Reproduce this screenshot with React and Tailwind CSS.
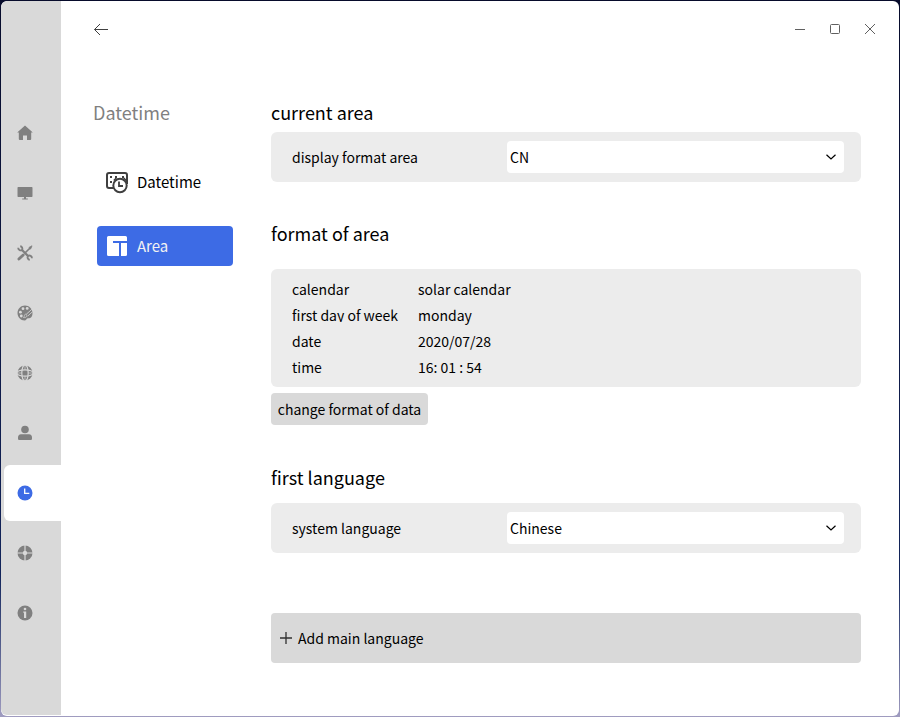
const gray = "#808080";

function HomeIcon() {
  return (
    <svg width="16" height="16" viewBox="0 0 16 16" fill={gray}>
      <path d="M8 .4 15.8 7.600H14.200V14a1 1 0 0 1-1 1H10V10.600H6V15H2.800a1 1 0 0 1-1-1V7.600H.2Z" />
    </svg>
  );
}

function DisplayIcon() {
  return (
    <svg width="16" height="16" viewBox="0 0 16 16" fill={gray}>
      <path d="M1.2 2H14.8a.7.7 0 0 1 .7.7V11.3a.7.7 0 0 1-.7.7H9v1.6h1.8V14.6H5.2V13.6H7V12H1.2a.7.7 0 0 1-.7-.7V2.7a.7.7 0 0 1 .7-.7Z" />
    </svg>
  );
}

function ToolsIcon() {
  return (
    <svg width="16" height="16" viewBox="0 0 16 16" fill="none" stroke={gray}>
      <path d="M1.9 14.1 6.2 9.9" strokeWidth="2.8" strokeLinecap="round" />
      <path d="M7.6 8.4 12.8 3.2" strokeWidth="1.5" />
      <path d="M12 2.400 15 .8 13.800 3.800 12.600 4.200Z" fill={gray} strokeWidth=".8" />
      <path d="M5 5 11.3 11.3" strokeWidth="2.3" />
      <path d="M1.2 2.8A2.500 2.500 0 0 0 5 5 2.500 2.500 0 0 0 3.200 1.200" strokeWidth="1.9" />
      <path d="M14.900 13.200A2.500 2.500 0 0 0 11 11 2.500 2.500 0 0 0 12.800 14.900" strokeWidth="1.9" />
    </svg>
  );
}

function PaletteIcon() {
  return (
    <svg width="16" height="16" viewBox="0 0 16 16">
      <path d="M8 .5C3.8.5.5 3.8.5 8s3.3 7.5 7 7.5c2 0 1.5-1.7 2.8-2.1 1.5-.4 2.2.5 3.7-.8.9-.8 1.5-2.6 1.5-4.6C15.5 3.8 12.2.5 8 .5Z" fill={gray} />
      <g fill="#d9d9d9">
        <circle cx="6" cy="3.7" r="1.4" />
        <circle cx="10.2" cy="3.4" r="1.4" />
        <circle cx="3.4" cy="7.2" r="1.4" />
        <circle cx="4.3" cy="11" r="1.4" />
      </g>
      <path d="M15 4.200 9.200 9.300M15.400 6.800 10.800 11" stroke="#d9d9d9" strokeWidth=".8" />
      <path d="M6.500 12.500c1.600.3 3.300-.3 3.600-2L8.700 9.200C7 9.300 7.700 11.600 6.500 12.500Z" fill={gray} stroke="#d9d9d9" strokeWidth=".7" />
    </svg>
  );
}

function GlobeIcon() {
  return (
    <svg width="16" height="16" viewBox="0 0 16 16">
      <circle cx="8" cy="8" r="7.6" fill={gray} />
      <g fill="none" stroke="#d9d9d9" strokeWidth="1.2">
        <ellipse cx="8" cy="8" rx="3.200" ry="8.200" />
        <ellipse cx="8" cy="8" rx="8.200" ry="3.200" />
        <path d="M8 0V4.500M8 11.500V16M0 8H4.500M11.500 8H16" strokeWidth=".7" />
      </g>
    </svg>
  );
}

function UserIcon() {
  return (
    <svg width="16" height="16" viewBox="0 0 16 16" fill={gray}>
      <circle cx="8" cy="4.500" r="3.800" />
      <path d="M4 9.200H12c2 0 3 1.400 3 3.400V13.400c0 .9-.6 1.600-1.500 1.600H2.500C1.600 15 1 14.300 1 13.400V12.600C1 10.600 2 9.200 4 9.200Z" />
    </svg>
  );
}

function ClockIcon() {
  return (
    <svg width="16" height="16" viewBox="0 0 16 16">
      <circle cx="8" cy="8" r="7.500" fill="#3d6be5" />
      <path d="M7.700 3.400V8.400H12.300" fill="none" stroke="#fff" strokeWidth="1.300" />
    </svg>
  );
}

function QuartersIcon() {
  return (
    <svg width="16" height="16" viewBox="0 0 16 16">
      <circle cx="8" cy="8" r="7.500" fill={gray} />
      <circle cx="8" cy="8" r="2.200" fill="#d9d9d9" />
      <path d="M8 0V16M0 8H16" stroke="#d9d9d9" strokeWidth="1.200" />
    </svg>
  );
}

function InfoIcon() {
  return (
    <svg width="16" height="16" viewBox="0 0 16 16">
      <circle cx="8" cy="8" r="7.500" fill={gray} />
      <circle cx="8" cy="4" r="1.300" fill="#d9d9d9" />
      <path d="M6.300 6.500H9.200V13H7V7.800H6.300Z" fill="#d9d9d9" />
    </svg>
  );
}

const navItems = [
  HomeIcon,
  DisplayIcon,
  ToolsIcon,
  PaletteIcon,
  GlobeIcon,
  UserIcon,
  ClockIcon,
  QuartersIcon,
  InfoIcon,
];

function Sidebar() {
  return (
    <nav className="flex h-[714px] w-[60px] shrink-0 flex-col gap-1 rounded-l-md bg-[#d9d9d9] pt-[104px] pl-[3px]">
      {navItems.map((Icon, i) => (
        <button
          key={i}
          className={
            i === 6
              ? "flex h-14 w-[57px] items-center rounded-l-md bg-white pl-[13px]"
              : "flex h-14 w-[57px] items-center rounded-l-md pl-[13px]"
          }
        >
          <Icon />
        </button>
      ))}
    </nav>
  );
}

function TitleBar() {
  return (
    <header className="flex h-14 items-center justify-between pr-[21px] pl-8">
      <svg width="16" height="16" viewBox="0 0 16 16" fill="none" stroke="#404040">
        <path d="M1.500 8.500H15M7 3 1.500 8.500 7 14" />
      </svg>
      <div className="flex gap-[19px]">
        <svg width="16" height="16" viewBox="0 0 16 16" fill="none" stroke="#606060">
          <path d="M3 8.500H13" />
        </svg>
        <svg width="16" height="16" viewBox="0 0 16 16" fill="none" stroke="#606060">
          <rect x="3.500" y="3.500" width="9" height="9" rx="1" />
        </svg>
        <svg width="16" height="16" viewBox="0 0 16 16" fill="none" stroke="#606060">
          <path d="M3 3 13 13M13 3 3 13" />
        </svg>
      </div>
    </header>
  );
}

function DatetimeIcon() {
  return (
    <svg width="24" height="24" viewBox="0 0 24 24" fill="none" stroke="#404040" strokeWidth="2">
      <path d="M9 18H4a2 2 0 0 1-2-2V5a2 2 0 0 1 2-2H20a2 2 0 0 1 2 2V14" />
      <path d="M5 7H7M5 12H7M10 7H12M17 7H19" />
      <circle cx="15" cy="15.500" r="6.700" fill="#fff" />
      <path d="M14 11.500V16H18" strokeWidth="1.800" />
      <path d="M8.800 10.500 11.300 8M18.700 8 21.200 10.500" strokeWidth="1.600" />
    </svg>
  );
}

function AreaIcon() {
  return (
    <svg width="20" height="20" viewBox="0 0 20 20" fill="#fff">
      <path d="M1.500 0H18.500A1.500 1.500 0 0 1 20 1.500V5H6V7H12V20H1.500A1.500 1.500 0 0 1 0 18.500V1.500A1.500 1.500 0 0 1 1.500 0Z" />
      <path d="M14 7H20V18.500A1.500 1.500 0 0 1 18.500 20H14Z" />
    </svg>
  );
}

function SubNav() {
  return (
    <aside className="flex w-[210px] shrink-0 flex-col pt-[41px] pl-8">
      <h1 className="h-7 text-[18px] leading-7 text-[#808080]">Datetime</h1>
      <div className="mt-9 ml-1 flex w-[136px] flex-col gap-6 text-[15px]">
        <button className="flex h-10 items-center gap-2 rounded pl-2 text-black">
          <DatetimeIcon />
          <span>Datetime</span>
        </button>
        <button className="flex h-10 items-center gap-[10px] rounded bg-[#3d6be5] pl-[10px] text-[#f2f2f2]">
          <AreaIcon />
          <span>Area</span>
        </button>
      </div>
    </aside>
  );
}

function SelectRow({ label, value }) {
  return (
    <div className="flex h-[50px] items-center rounded-md bg-[#ececec] pr-[17px] pl-[21px]">
      <span className="w-[215px]">{label}</span>
      <button className="flex h-8 flex-1 items-center justify-between rounded bg-white pr-[7px] pl-[3px]">
        <span>{value}</span>
        <svg width="12" height="12" viewBox="0 0 12 12" fill="none" stroke="#000" strokeWidth="1.200">
          <path d="M1.500 3.700 6 8 10.500 3.700" />
        </svg>
      </button>
    </div>
  );
}

function Content() {
  return (
    <main className="flex w-[590px] shrink-0 flex-col pt-[41px]">
      <h2 className="h-7 text-[18px] leading-7">current area</h2>
      <div className="mt-1.5">
        <SelectRow label="display format area" value="CN" />
      </div>

      <h2 className="mt-[37px] h-7 text-[18px] leading-7">format of area</h2>
      <div className="mt-[22px] grid h-[118px] auto-rows-[26px] grid-cols-[126px_1fr] rounded-md bg-[#ececec] pt-[7px] pl-[21px] leading-[26px]">
        <span>calendar</span>
        <span>solar calendar</span>
        <span className="h-5 overflow-hidden">first day of week</span>
        <span>monday</span>
        <span>date</span>
        <span>2020/07/28</span>
        <span>time</span>
        <span>16: 01 : 54</span>
      </div>
      <button className="mt-1.5 h-8 w-[157px] rounded bg-[#d9d9d9]">change format of data</button>

      <h2 className="mt-[38px] h-7 text-[18px] leading-7">first language</h2>
      <div className="mt-3">
        <SelectRow label="system language" value="Chinese" />
      </div>

      <button className="mt-[60px] flex h-[50px] items-center gap-1.5 rounded bg-[#d9d9d9] pl-[9px]">
        <svg width="12" height="12" viewBox="0 0 12 12" stroke="#303030" strokeWidth="1.300">
          <path d="M0 6H12M6 0V12" />
        </svg>
        <span>Add main language</span>
      </button>
    </main>
  );
}

export default function App() {
  return (
    <div className="h-[717px] w-[900px] overflow-hidden bg-linear-to-b from-[#070b2b] via-[#12245a] via-80% to-[#a09cc0] p-px font-['Noto_Sans_CJK_SC',sans-serif] text-[14px] whitespace-nowrap text-black">
      <div className="flex h-[715px] w-[898px] overflow-hidden rounded-md bg-white">
        <Sidebar />
        <div className="flex flex-1 flex-col">
          <TitleBar />
          <div className="flex flex-1">
            <SubNav />
            <Content />
          </div>
        </div>
      </div>
    </div>
  );
}
